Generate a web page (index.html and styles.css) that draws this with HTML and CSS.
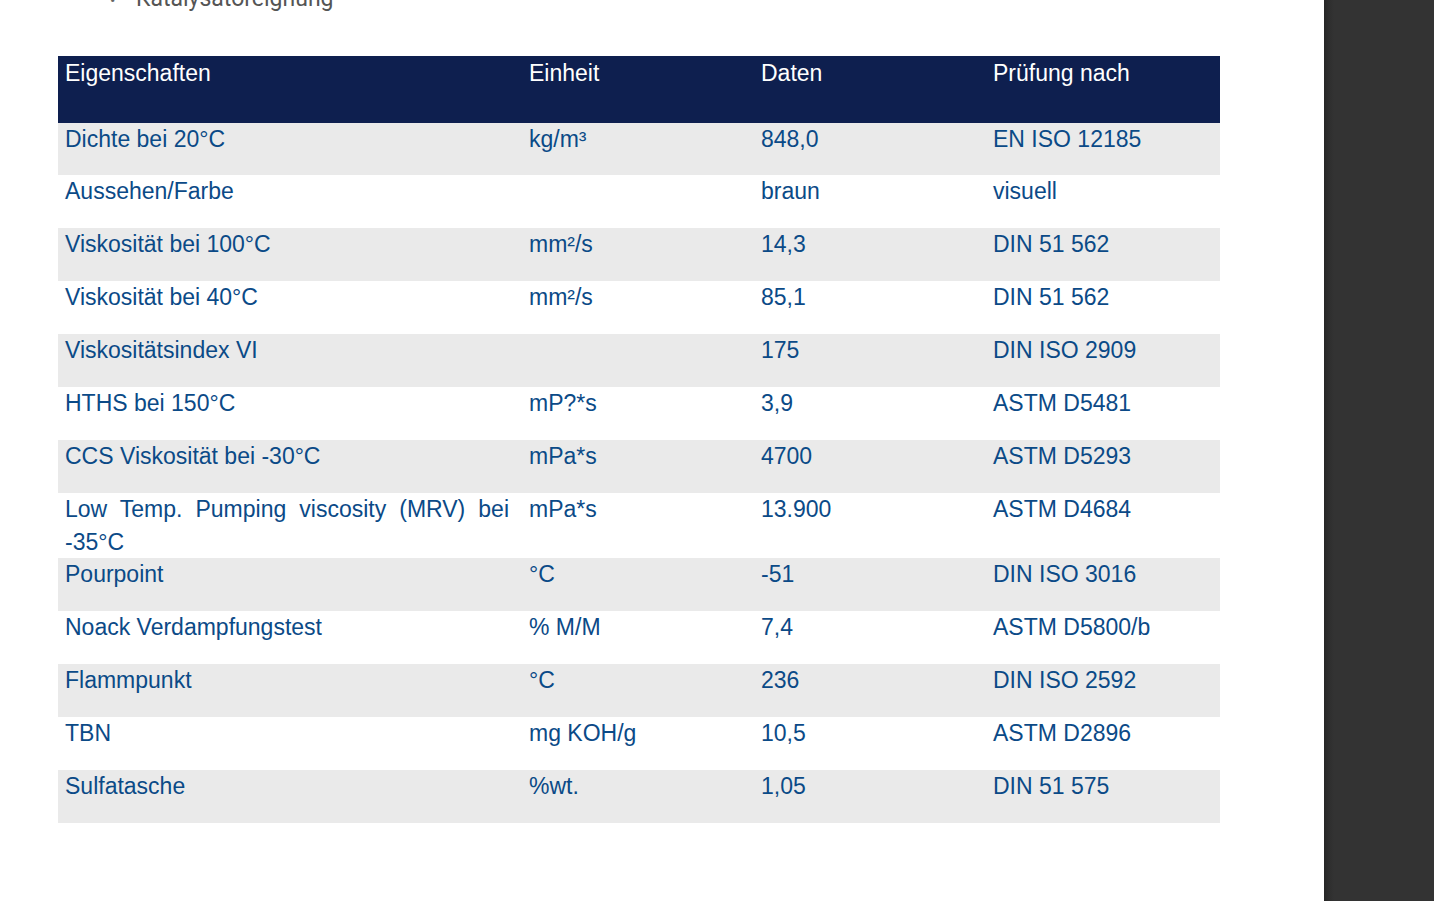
FILE: index.html
```html
<!DOCTYPE html>
<html lang="de">
<head>
<meta charset="utf-8">
<title>Technische Daten</title>
<link rel="stylesheet" href="styles.css">
</head>
<body>
<div class="page">
  <main class="content">
    <ul class="features">
      <li>Katalysatoreignung</li>
    </ul>
    <table class="data">
      <colgroup>
        <col class="c1"><col class="c2"><col class="c3"><col class="c4">
      </colgroup>
      <thead>
        <tr><th>Eigenschaften</th><th>Einheit</th><th>Daten</th><th>Prüfung nach</th></tr>
      </thead>
      <tbody>
        <tr><td>Dichte bei 20°C</td><td>kg/m³</td><td>848,0</td><td>EN ISO 12185</td></tr>
        <tr><td>Aussehen/Farbe</td><td></td><td>braun</td><td>visuell</td></tr>
        <tr><td>Viskosität bei 100°C</td><td>mm²/s</td><td>14,3</td><td>DIN 51 562</td></tr>
        <tr><td>Viskosität bei 40°C</td><td>mm²/s</td><td>85,1</td><td>DIN 51 562</td></tr>
        <tr><td>Viskositätsindex VI</td><td></td><td>175</td><td>DIN ISO 2909</td></tr>
        <tr><td>HTHS bei 150°C</td><td>mP?*s</td><td>3,9</td><td>ASTM D5481</td></tr>
        <tr><td>CCS Viskosität bei -30°C</td><td>mPa*s</td><td>4700</td><td>ASTM D5293</td></tr>
        <tr><td>Low Temp. Pumping viscosity (MRV) bei -35°C</td><td>mPa*s</td><td>13.900</td><td>ASTM D4684</td></tr>
        <tr><td>Pourpoint</td><td>°C</td><td>-51</td><td>DIN ISO 3016</td></tr>
        <tr><td>Noack Verdampfungstest</td><td>% M/M</td><td>7,4</td><td>ASTM D5800/b</td></tr>
        <tr><td>Flammpunkt</td><td>°C</td><td>236</td><td>DIN ISO 2592</td></tr>
        <tr><td>TBN</td><td>mg KOH/g</td><td>10,5</td><td>ASTM D2896</td></tr>
        <tr><td>Sulfatasche</td><td>%wt.</td><td>1,05</td><td>DIN 51 575</td></tr>
      </tbody>
    </table>
  </main>
  <aside class="sidebar"></aside>
</div>
</body>
</html>
```

FILE: styles.css
```css
html, body {
  margin: 0;
  padding: 0;
  background: #ffffff;
  height: 100%;
  overflow: hidden;
}

.page {
  display: flex;
  height: 901px;
}

.content {
  flex: 1;
  padding-left: 58px;
  overflow: hidden;
}

.sidebar {
  width: 110px;
  flex: none;
  background: linear-gradient(to right, #262626 0px, #2e2e2e 5px, #333333 10px, #333333 100%);
}

.features {
  margin: -16px 0 0 0;
  padding-left: 52px;
  font-family: Roboto, "Liberation Sans", sans-serif;
  font-size: 23px;
  line-height: 30px;
  color: #555555;
  list-style: none;
}

.features li {
  display: flex;
  align-items: baseline;
  height: 30px;
}

.features li::before {
  content: "•";
  width: 26px;
  flex: none;
  font-size: 16px;
  line-height: 16px;
  color: #666666;
}

.data {
  margin-top: 42px;
  width: 1162px;
  border-collapse: collapse;
  table-layout: fixed;
  font-family: "Liberation Sans", Arial, sans-serif;
  font-size: 23px;
  line-height: 32.5px;
}

.c1 { width: 464px; }
.c2 { width: 232px; }
.c3 { width: 232px; }
.c4 { width: 234px; }

.data th,
.data td {
  padding: 0 13px 0 7px;
  vertical-align: top;
  text-align: left;
  font-weight: normal;
}

.data th {
  padding-top: 1px;
}

.data thead tr {
  height: 67px;
  background: #0e1f4f;
  color: #ffffff;
}

.data tbody tr {
  height: 53px;
  color: #0b4a87;
}

.data tbody tr:first-child {
  height: 52px;
}

.data tbody tr:nth-child(odd) {
  background: #eaeaea;
}

.data tbody td:first-child {
  text-align: justify;
}
```
